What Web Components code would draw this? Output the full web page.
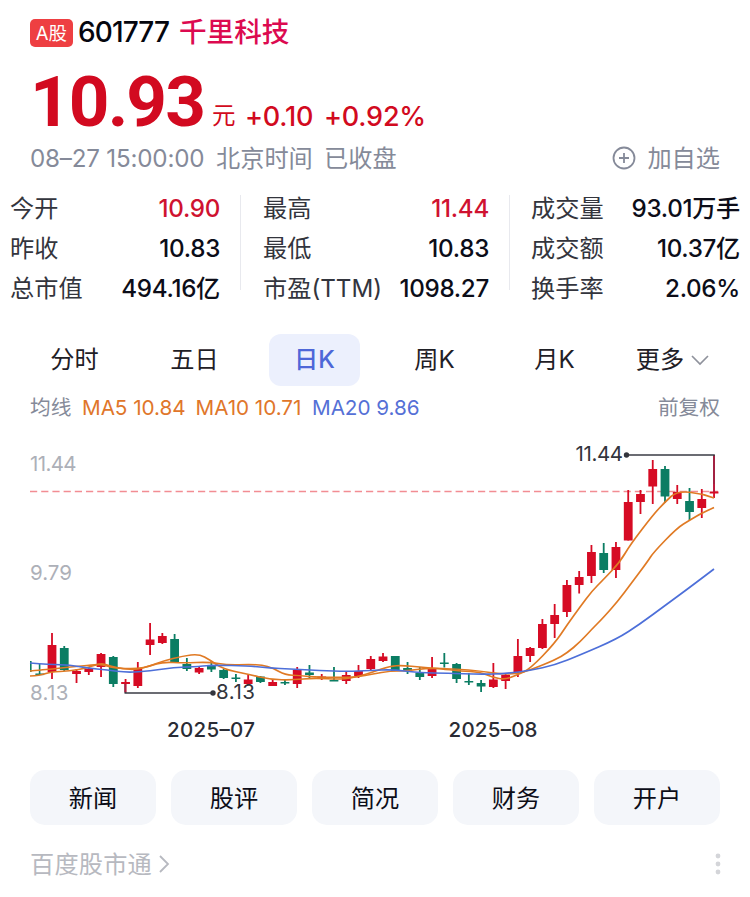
<!DOCTYPE html>
<html lang="zh-CN">
<head>
<meta charset="utf-8">
<title>千里科技 601777</title>
<style>
  body {
    margin: 0;
    background: #fff;
    color: #1f2026;
    font-family: Inter, "Noto Sans CJK SC", sans-serif;
    font-size: 24.2px;
  }
</style>
</head>
<body>
<stock-card></stock-card>

<script>
// y values are in the chart's own space, see the svg viewBox
// [body top, body bottom, high, low, up]
const candles = [
  [645, 672, 633, 679, 1], [648, 670, 646, 671, 0], [671, 674, 669, 683, 1],
  [669, 672, 667, 675, 1], [654, 667, 653, 677, 1], [657, 684, 656, 687, 0],
  [682, 684, 679, 693, 1], [668, 686, 662, 688, 1], [639.5, 645, 623, 655, 1],
  [636, 643, 633, 644, 1], [639, 662, 634, 663, 0], [664, 669, 658, 671, 0],
  [668, 672.5, 666, 674, 1], [665, 669.5, 661, 672, 0], [670, 678, 669, 679, 0],
  [677.5, 679, 674, 682, 0], [679.5, 684, 675, 684, 1], [676.5, 682, 676, 683, 0],
  [682, 686, 680, 686, 1], [682, 683.5, 680, 685, 0], [670, 684, 667, 688, 1],
  [672.5, 675, 665, 678, 0], [676.5, 678, 674, 680, 1], [680, 681.5, 667, 681, 0],
  [675, 681, 672, 684, 1], [671, 676, 665, 678, 1], [659, 669, 656, 671, 1],
  [656.5, 661, 653, 662, 1], [656, 671, 656, 671, 0], [668, 671, 662, 674, 0],
  [673, 677, 667, 680, 0], [668, 676, 657, 678, 1], [662.5, 664, 653, 667.5, 0],
  [664, 679, 663, 683, 0], [681, 682.5, 673, 685, 0], [683, 686.5, 680, 692, 0],
  [679.5, 687, 663, 688, 1], [675, 681, 673, 689, 1], [656, 672, 639, 677, 1],
  [648, 656, 647, 662, 1], [624, 648, 619, 649, 1], [615, 624, 604, 638, 1],
  [585, 612, 580, 617, 1], [577, 585, 571, 593.5, 1], [552, 576, 545, 583, 1],
  [553, 570, 543, 573, 0], [547, 570, 542, 578, 1], [502, 540.5, 490, 540.5, 1],
  [494, 502, 490, 514, 1], [469, 486.5, 460, 504, 1], [469, 496.5, 466, 503, 0],
  [492, 499, 485, 504, 1], [501, 512, 488, 520, 0], [499, 508, 489, 518, 1],
  [491.5, 493.5, 455, 498, 1]
]

const averages = {
  ma10: '30,671 40,670 52,669 70,667 93,665 101,664 113,668 137,669 150,666 163,662 183,663 210,662 227,665 250,664.5 262,665 273,668 285,675 300,675.5 313,677 340,677.5 357,677 373,674 390,671 407,671 427,668 457,669 480,671 500,674 517,674 530,670 555,660 567,653 580,642 592,629 603,618 618,601 630,585 648,561 653,553 677,528 690,520 702,513 714,507.5',
  ma5: '30,676 40,675.5 50,672 70,671 87,668 101,663 110,666 123,669 137,669.5 150,666 163,661 183,656 199,654 210,660 223,669 247,674 270,679.5 293,680 313,678 343,679.5 360,676 373,672 390,666 403,665.5 420,667 447,669.5 460,671 480,672 493,677.5 505,679.5 517,675 530,669 555,643 567,625 580,607 592,591 603,580 620,562 630,545 653,515 665,502 677,491 702,493.5 714,498',
  ma20: '30,663 50,664.5 70,665 87,668 107,670 127,672.5 150,671 173,667.5 200,666.5 213,665 250,666 270,668 290,669 320,670.5 347,671.5 370,670.5 393,669.5 420,673 447,673 480,674.5 507,673.5 530,670.5 555,665 580,655 617,639 640,624 663,607 693,585 714,569'
}

// rounds the corners of a point list with quadratic curves
const smooth = (points) => {
  const p = points.split(' ').map(s => s.split(',').map(Number))
  let d = `M${p[0]}`
  for (let i = 1; i < p.length - 1; i++) {
    const end = i === p.length - 2 ? p[i + 1] : [(p[i][0] + p[i + 1][0]) / 2, (p[i][1] + p[i + 1][1]) / 2]
    d += `Q${p[i]} ${end}`
  }
  return d
}

const define = (name, html) => {
  const template = document.createElement('template')
  template.innerHTML = html
  customElements.define(name, class extends HTMLElement {
    constructor() {
      super()
      this.attachShadow({ mode: 'open' }).appendChild(template.content.cloneNode(true))
    }
  })
}

define('stock-title', `
  <style>
    :host { display: flex; align-items: center; height: 36px; padding: 14px 30px 0; line-height: 36px; }
    .tag {
      width: 43px; height: 28px; line-height: 28px; border-radius: 5px;
      background: #ee3f42; color: #fff; font-size: 18.5px; text-align: center; margin-top: 2px;
    }
    .code { margin-left: 5px; font-size: 28px; color: #05060e; font-weight: 500; letter-spacing: -0.9px; width: 101px; white-space: nowrap; }
    .name { font-size: 27.6px; color: #dc0a50; font-weight: 500; }
  </style>
  <div class="tag"><slot name="market"></slot></div>
  <div class="code"><slot name="code"></slot></div>
  <div class="name"><slot></slot></div>
`)

define('stock-price', `
  <style>
    :host { display: flex; align-items: baseline; height: 88px; padding-left: 30px; color: #d20a20; line-height: 103px; white-space: nowrap; }
    .price { font: 700 71px/103px Roboto, sans-serif; letter-spacing: -1.9px; width: 182px; }
    .unit { font-size: 23.5px; width: 33px; position: relative; top: -2px; }
    .diff { font-size: 27px; font-weight: 500; letter-spacing: -0.2px; width: 79px; }
  </style>
  <div class="price"><slot></slot></div>
  <div class="unit">元</div>
  <div class="diff"><slot name="diff"></slot></div>
  <div class="diff"><slot name="rate"></slot></div>
`)

define('stock-status', `
  <style>
    :host { display: flex; align-items: center; height: 38px; padding: 2px 30px 0; color: #858a99; line-height: 38px; white-space: nowrap; }
    .time { width: 186px; letter-spacing: -0.2px; }
    .zone { width: 108px; }
    .add { margin-left: auto; display: flex; align-items: center; gap: 11px; }
    svg { margin-bottom: 2px; }
  </style>
  <div class="time">08–27 15:00:00</div>
  <div class="zone">北京时间</div>
  <div>已收盘</div>
  <div class="add">
    <svg width="24" height="24" viewBox="0 0 24 24" fill="none" stroke="#858a99" stroke-width="1.8">
      <circle cx="12" cy="12" r="10.5"/><path d="M12 7v10M7 12h10"/>
    </svg>
    <span>加自选</span>
  </div>
`)

define('quote-item', `
  <style>
    :host { display: flex; justify-content: space-between; height: 40px; line-height: 42px; color: #33353d; white-space: nowrap; }
    .value { color: #0c0d18; font-weight: 500; letter-spacing: -0.3px; }
    :host([up]) .value { color: #cf1230; }
  </style>
  <span><slot name="label"></slot></span>
  <span class="value"><slot></slot></span>
`)

define('quote-grid', `
  <style>
    :host { display: flex; padding: 10px 10px 0; height: 120px; }
    .col { width: 210px; }
    .mid { width: 226px; }
    i { width: 1px; height: 95px; background: #e8e9ee; margin: 7px 22px 0 20px; }
    i + .col { width: 209px; }
    i.last { margin-right: 21px; }
  </style>
  <div class="col">
    <quote-item up><span slot="label">今开</span>10.90</quote-item>
    <quote-item><span slot="label">昨收</span>10.83</quote-item>
    <quote-item><span slot="label">总市值</span>494.16亿</quote-item>
  </div>
  <i></i>
  <div class="mid">
    <quote-item up><span slot="label">最高</span>11.44</quote-item>
    <quote-item><span slot="label">最低</span>10.83</quote-item>
    <quote-item><span slot="label">市盈(TTM)</span>1098.27</quote-item>
  </div>
  <i class="last"></i>
  <div class="col">
    <quote-item><span slot="label">成交量</span>93.01万手</quote-item>
    <quote-item><span slot="label">成交额</span>10.37亿</quote-item>
    <quote-item><span slot="label">换手率</span>2.06%</quote-item>
  </div>
`)

define('chart-tab', `
  <style>
    :host { display: flex; width: 120px; justify-content: center; }
    div { display: flex; align-items: center; justify-content: center; gap: 7px; width: 91px; height: 52px; line-height: 52px; border-radius: 12px; margin-left: -1px; white-space: nowrap; }
    :host([active]) div { background: #ecf0fd; color: #4e67d8; }
    :host([active]) { font-weight: 500; }
    span { height: 52px; }
  </style>
  <div><span><slot></slot></span><slot name="icon"></slot></div>
`)

define('chart-legend', `
  <style>
    :host { display: flex; align-items: center; height: 28px; line-height: 28px; padding: 8px 30px 0; font-size: 20.7px; color: #858a99; white-space: nowrap; }
    span { color: #e0762a; letter-spacing: -0.05px; }
    .label { width: 52px; }
    .ma5 { width: 113.5px; }
    .ma10 { width: 116.5px; }
    .ma20 { color: #5570d6; }
    .adjust { margin-left: auto; }
  </style>
  <div class="label">均线</div>
  <span class="ma5">MA5 10.84</span>
  <span class="ma10">MA10 10.71</span>
  <span class="ma20">MA20 9.86</span>
  <div class="adjust">前复权</div>
`)

define('pill-button', `
  <style>
    :host { display: block; flex: 1; height: 55px; line-height: 57px; border-radius: 15px; background: #f4f6fa; color: #0c0d18; text-align: center; }
  </style>
  <slot></slot>
`)

class KlineChart extends HTMLElement {
  constructor() {
    super()
    this.attachShadow({ mode: 'open' })
  }

  connectedCallback() {
    const bars = candles.map(([top, bottom, high, low, up], i) => {
      const x = 52 + i * 12.26
      return `<g fill="${up ? '#d60b24' : '#0b7d63'}">
        <rect x="${x - 0.9}" y="${high}" width="1.8" height="${low - high}"/>
        <rect x="${x - 4.4}" y="${top}" width="8.8" height="${bottom - top}"/>
      </g>`
    }).join('')

    this.shadowRoot.innerHTML = `
      <style>
        :host { display: block; height: 328px; }
        svg { display: block; }
        .line { fill: none; stroke-width: 1.7; stroke-linejoin: round; }
        .axis { font-size: 20.5px; fill: #adb0b8; }
        .mark { font-size: 20.5px; fill: #33353d; }
        .date { font-size: 20.5px; fill: #2a2c35; font-weight: 500; }
      </style>
      <svg width="750" height="328" viewBox="0 422 750 328">
        <path d="M30 491.5H718" stroke="#f28d93" stroke-width="1.6" stroke-dasharray="7.2 4"/>
        <g fill="#0b7d63">
          <rect x="30" y="661" width="1.6" height="11"/>
          <rect x="38.8" y="664" width="1.6" height="11"/>
          <rect x="35.4" y="673.5" width="8.8" height="1.6"/>
        </g>
        ${bars}
        <path class="line" stroke="#e07a24" d="${smooth(averages.ma5)}"/>
        <path class="line" stroke="#e07a24" d="${smooth(averages.ma10)}"/>
        <path class="line" stroke="#4d6fd9" d="${smooth(averages.ma20)}"/>
        <path d="M714 484V455H626M125.3 684V693H212" fill="none" stroke="#3b3d46" stroke-width="1.6"/>
        <path d="M714 456V492M125.3 684V692" stroke="#b51d42" stroke-width="1.6"/>
        <circle cx="626.5" cy="455" r="2.7" fill="#33353d"/>
        <circle cx="213" cy="693" r="2.7" fill="#33353d"/>
        <text class="axis" x="30" y="471" textLength="46.5">11.44</text>
        <text class="axis" x="30" y="580" textLength="42">9.79</text>
        <text class="axis" x="30" y="700" textLength="38.5">8.13</text>
        <text class="mark" x="575.5" y="461" textLength="47.5">11.44</text>
        <text class="mark" x="216" y="699" textLength="39">8.13</text>
        <text class="date" x="167" y="737" textLength="88">2025–07</text>
        <text class="date" x="448.5" y="737" textLength="89">2025–08</text>
      </svg>
    `
  }
}
customElements.define('kline-chart', KlineChart)

define('stock-card', `
  <style>
    :host { display: block; width: 750px; }
    .tabs { display: flex; padding: 26px 15px 0; }
    .tabs chart-tab:last-of-type { margin-left: -2px; }
    .pills { display: flex; gap: 15px; padding: 20px 30px 0; }
    .footer { display: flex; align-items: center; height: 40px; line-height: 40px; padding: 19px 30px 0; color: #b7b9c0; }
    .footer span { letter-spacing: 0.2px; padding-top: 2px; }
    .footer svg { margin-left: 5px; }
    .footer .more { margin: 0 -1px 0 auto; }
  </style>
  <stock-title>
    <span slot="market">A股</span><span slot="code">601777</span>千里科技
  </stock-title>
  <stock-price>10.93<span slot="diff">+0.10</span><span slot="rate">+0.92%</span></stock-price>
  <stock-status></stock-status>
  <quote-grid></quote-grid>
  <div class="tabs">
    <chart-tab>分时</chart-tab>
    <chart-tab>五日</chart-tab>
    <chart-tab active>日K</chart-tab>
    <chart-tab>周K</chart-tab>
    <chart-tab>月K</chart-tab>
    <chart-tab>更多<svg slot="icon" width="18" height="12" viewBox="0 0 18 12" fill="none" stroke="#8f929c" stroke-width="1.7"><path d="M1 2l8 8 8-8"/></svg></chart-tab>
  </div>
  <chart-legend></chart-legend>
  <kline-chart></kline-chart>
  <div class="pills">
    <pill-button>新闻</pill-button>
    <pill-button>股评</pill-button>
    <pill-button>简况</pill-button>
    <pill-button>财务</pill-button>
    <pill-button>开户</pill-button>
  </div>
  <div class="footer">
    <span>百度股市通</span>
    <svg width="14" height="20" viewBox="0 0 14 20" fill="none" stroke="#b7b9c0" stroke-width="1.8"><path d="M3 2l8 8-8 8"/></svg>
    <svg class="more" width="6" height="24" viewBox="0 0 6 24" fill="#d4d5d9"><circle cx="3" cy="4" r="2.4"/><circle cx="3" cy="12" r="2.4"/><circle cx="3" cy="20" r="2.4"/></svg>
  </div>
`)
</script>
</body>
</html>
